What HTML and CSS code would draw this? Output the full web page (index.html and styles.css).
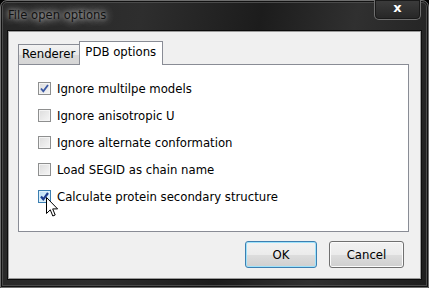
FILE: index.html
```html
<!DOCTYPE html>
<html lang="en">
<head>
    <meta charset="UTF-8">
    <title>File open options</title>
    <link rel="stylesheet" href="styles.css">
</head>
<body>
    <div class="window">
        <div class="titlebar">
            <span class="title">File open options</span>
            <div class="close">x</div>
        </div>

        <div class="client">
            <div class="tabs">
                <div class="tab">Renderer</div>
                <div class="tab active">PDB options</div>
            </div>

            <div class="panel">
                <label class="option">
                    <span class="check checked">
                        <svg viewBox="0 0 11 11"><path d="M2 5.5 L4.3 8.3 L9 2" /></svg>
                    </span>
                    Ignore multilpe models
                </label>
                <label class="option">
                    <span class="check"></span>
                    Ignore anisotropic U
                </label>
                <label class="option">
                    <span class="check"></span>
                    Ignore alternate conformation
                </label>
                <label class="option">
                    <span class="check"></span>
                    Load SEGID as chain name
                </label>
                <label class="option">
                    <span class="check checked hover">
                        <svg viewBox="0 0 11 11"><path d="M2 5.5 L4.3 8.3 L9 2" /></svg>
                    </span>
                    Calculate protein secondary structure
                </label>
            </div>

            <div class="buttons">
                <button class="btn default">OK</button>
                <button class="btn">Cancel</button>
            </div>
        </div>

        <!-- mouse pointer over the last checkbox -->
        <svg class="cursor" width="13" height="21" viewBox="0 0 13 21">
            <path d="M0.5 0.5 L0.5 16.5 L4.3 12.8 L6.8 19 L9.2 18 L6.7 11.9 L11.6 11.9 Z" />
        </svg>
    </div>
</body>
</html>
```

FILE: styles.css
```css
body {
    margin: 0;
    background-color: #000;
    font-family: 'DejaVu Sans', Verdana, sans-serif;
    font-size: 11.7px;
    color: #000;
}

.window {
    position: relative;
    width: 429px;
    height: 288px;
    box-sizing: border-box;
    display: flex;
    flex-direction: column;
    padding: 0 7px 8px 7px;
    border: 1px solid #6e6e6e;
    border-radius: 7px 7px 0 0;
    background: linear-gradient(100deg, #262626 0%, #2e2e2e 30%, #1c1c1c 55%, #303030 75%, #1e1e1e 100%);
    box-shadow: inset 0 0 0 1px #111, inset 0 0 0 2px #4a4a4a;
}

.titlebar {
    height: 29px;
    display: flex;
    justify-content: space-between;
    align-items: flex-start;
}

.title {
    margin-top: 7px;
    font-size: 11.6px;
    color: #111;
    text-shadow: 0 0 4px rgba(255, 255, 255, 0.55), 0 0 8px rgba(255, 255, 255, 0.5), 0 0 12px rgba(255, 255, 255, 0.45), 0 0 16px rgba(255, 255, 255, 0.35);
}

.close {
    width: 45px;
    height: 19px;
    margin-top: -1px;
    border: 1px solid #6f6f6f;
    border-top: none;
    border-radius: 0 0 5px 5px;
    background: linear-gradient(#3c3c3c, #262626);
    box-shadow: inset 0 0 0 1px #1a1a1a;
    color: #fff;
    font-family: 'DejaVu Sans', sans-serif;
    font-weight: bold;
    font-size: 13px;
    line-height: 16px;
    text-align: center;
}

.client {
    flex: 1;
    display: flex;
    flex-direction: column;
    padding: 9px 11px 0 9px;
    background-color: #f0f0f0;
    border: 1px solid #9a9a9a;
    box-shadow: 0 0 0 1px #0c0c0c;
    margin-top: 1px;
}

.tabs {
    display: flex;
    align-items: flex-end;
    height: 23px;
    position: relative;
    z-index: 1;
}

.tab {
    height: 20px;
    box-sizing: border-box;
    padding: 0 4px 0 3px;
    line-height: 19px;
    border: 1px solid #898c95;
    border-bottom: none;
    border-right: none;
    background: linear-gradient(#f3f3f3, #e9e9e9 50%, #d9d9d9 51%, #d6d6d6);
}

.tab.active {
    height: 24px;
    margin-bottom: -1px;
    padding: 0 6px 0 5px;
    line-height: 20px;
    border-right: 1px solid #898c95;
    background: #fff;
}

.panel {
    height: 168px;
    box-sizing: border-box;
    padding: 10px 0 0 19px;
    background-color: #fff;
    border: 1px solid #898c95;
}

.option {
    display: flex;
    align-items: center;
    height: 27px;
}

.check {
    width: 13px;
    height: 13px;
    box-sizing: border-box;
    margin-right: 6px;
    border: 1px solid #8e8f8f;
    background: linear-gradient(135deg, #dcdcdc, #f6f6f6);
    box-shadow: inset 0 0 0 1px #f4f4f4;
    display: flex;
    align-items: center;
    justify-content: center;
}

.check.hover {
    border-color: #3c7fb1;
    background: linear-gradient(135deg, #b9dff5, #e9f6fd);
    box-shadow: inset 0 0 0 1px #def0fb;
}

.check svg {
    width: 11px;
    height: 11px;
}

.check svg path {
    fill: none;
    stroke: #3a58a4;
    stroke-width: 1.8;
}

.check.hover svg path {
    stroke: #1c3d8f;
    stroke-width: 2.2;
}

.buttons {
    display: flex;
    justify-content: flex-end;
    gap: 12px;
    margin-top: 9px;
    padding-right: 5px;
}

.btn {
    width: 75px;
    height: 27px;
    font-family: inherit;
    font-size: 11.7px;
    color: #000;
    padding: 0;
    border: 1px solid #707070;
    border-radius: 3px;
    background: linear-gradient(#f2f2f2, #ebebeb 50%, #dddddd 51%, #cfcfcf);
    box-shadow: inset 0 0 0 1px #fbfbfb;
}

.btn.default {
    width: 72px;
    border-color: #3c7fb1;
    box-shadow: inset 0 0 0 1px #9ee2fb;
}

.cursor {
    position: absolute;
    left: 45px;
    top: 196px;
}

.cursor path {
    fill: #fff;
    stroke: #000;
    stroke-width: 1;
}
```
